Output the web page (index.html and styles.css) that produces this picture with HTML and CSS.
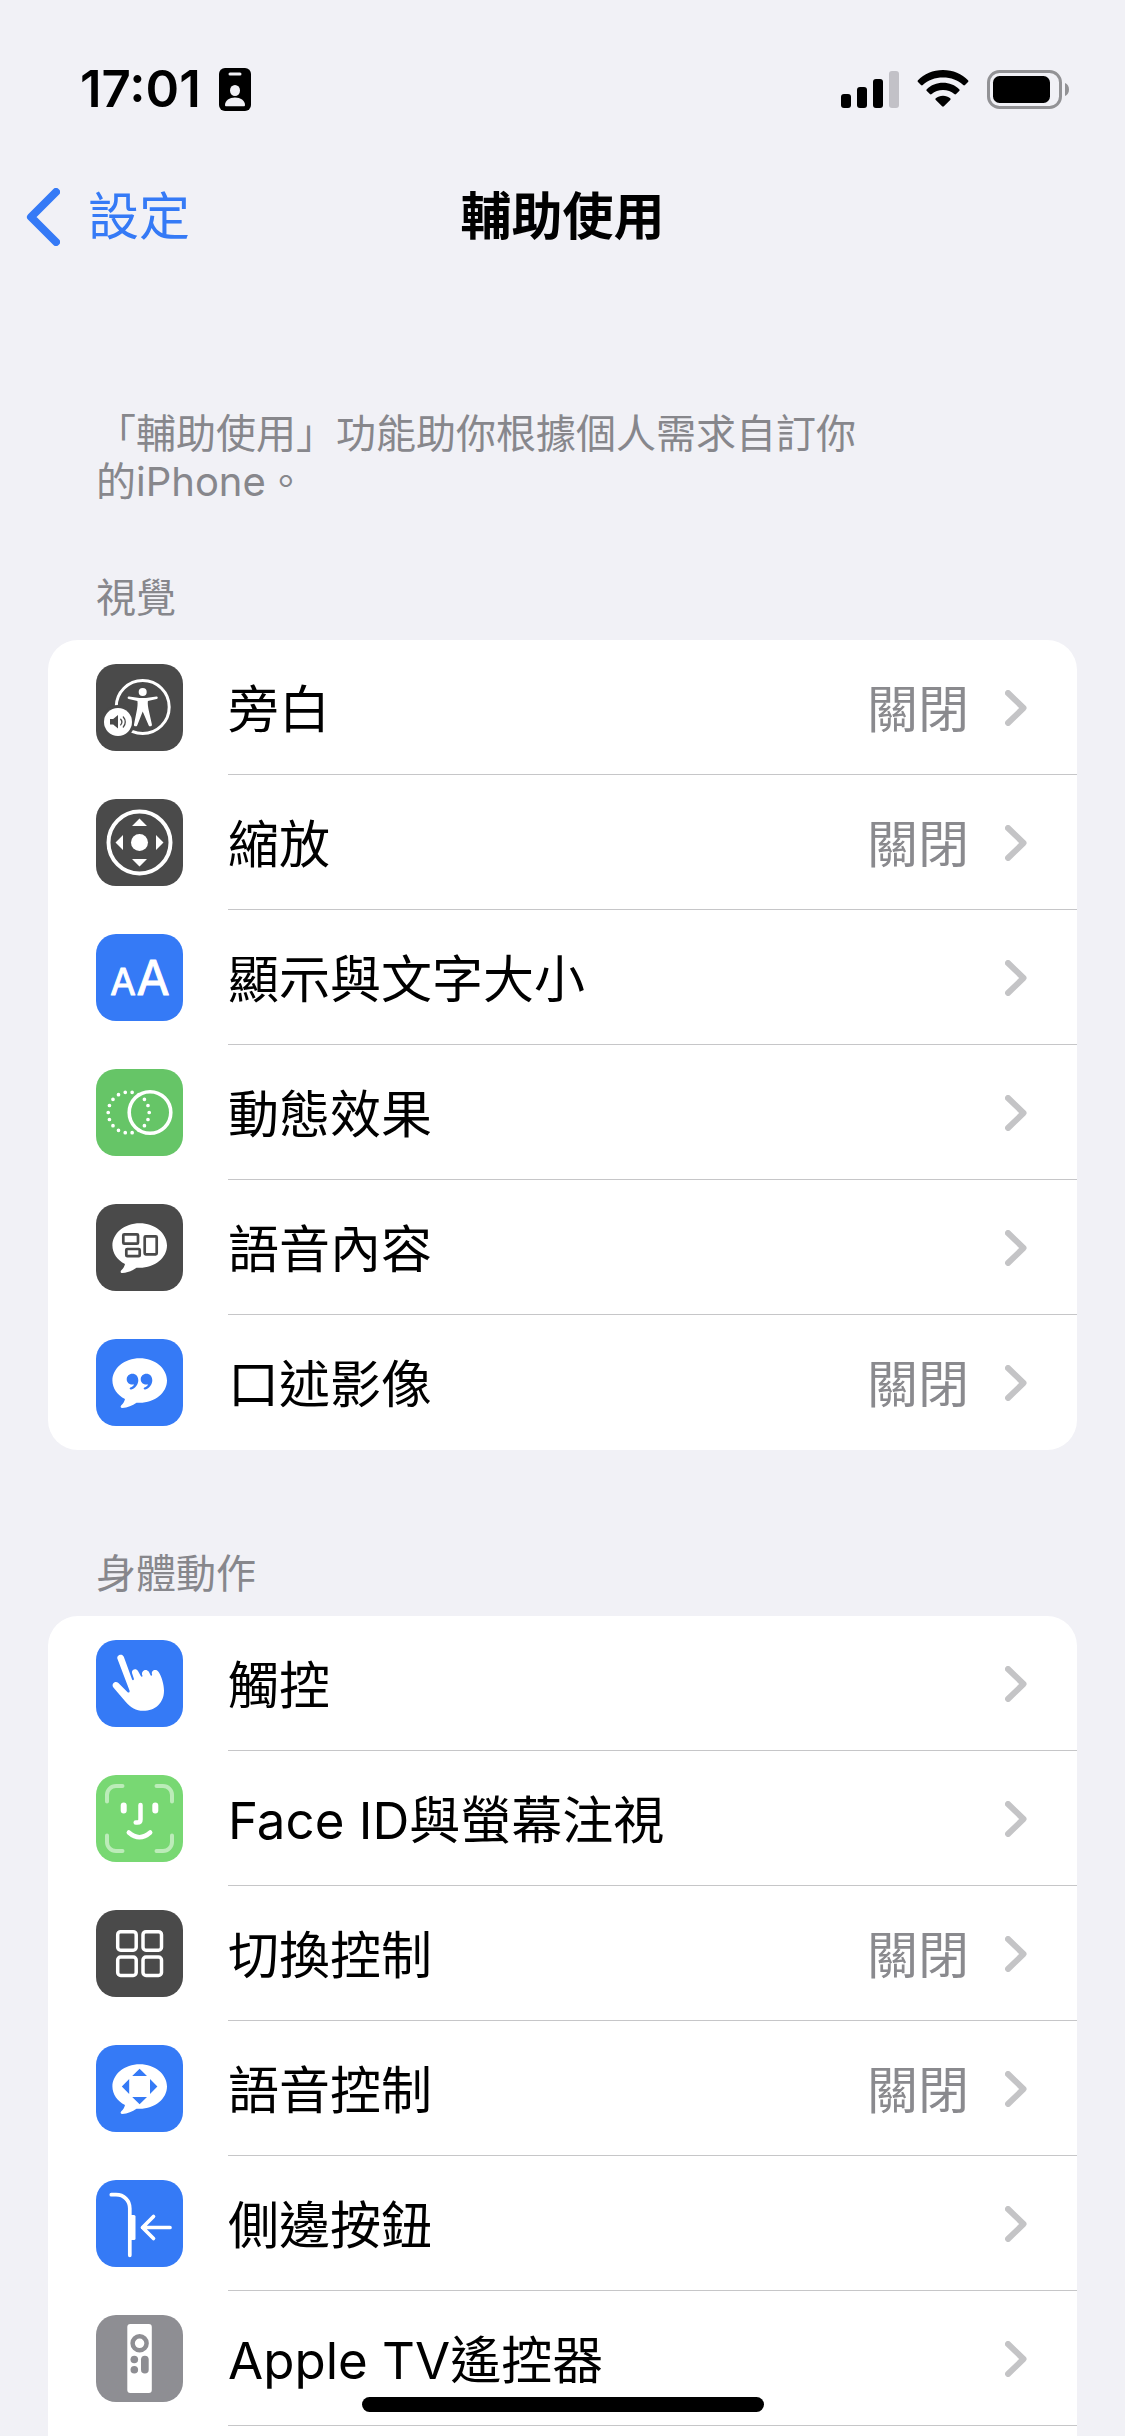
FILE: index.html
```html
<!DOCTYPE html>
<html lang="zh-Hant">

<head>
    <meta charset="UTF-8">
    <meta name="viewport" content="width=device-width, initial-scale=1.0">
    <title>輔助使用</title>
    <link rel="stylesheet" href="styles.css">
</head>

<body>
    <!-- shared shapes -->
    <svg class="defs" aria-hidden="true">
        <symbol id="chevron" viewBox="0 0 22 36">
            <path d="M3 3l15.500 15L3 33" fill="none" stroke="currentColor" stroke-width="6" stroke-linecap="round" stroke-linejoin="round"/>
        </symbol>
        <symbol id="bubble" viewBox="0 0 87 87">
            <path d="M43.700 19.200c15.100 0 27.300 10 27.300 22.300s-12.200 22.300-27.300 22.300h-3.200c-4 2.800-9 5-14.200 5.200-1.800 0-2.200-1.500-1-2.700 1.800-1.800 3.200-3.800 3.700-6.300C21.300 56 16.400 49.300 16.400 41.500c0-12.300 12.200-22.300 27.300-22.300z" fill="#fff"/>
        </symbol>
    </svg>

    <div class="status-bar">
        <div class="status-left">
            <span class="time">17:01</span>
            <svg width="32" height="43" viewBox="0 0 32 43" aria-hidden="true">
                <rect width="32" height="43" rx="6"/>
                <rect x="9.500" y="4.500" width="13" height="3" rx="1.500" fill="#f1f1f6"/>
                <ellipse cx="16" cy="22.500" rx="5" ry="5.500" fill="#f1f1f6"/>
                <path d="M6 37c0-4.500 4.500-7.500 10-7.500S26 32.500 26 37c0 1-.5 1.300-1.300 1.300H7.300C6.500 38.300 6 38 6 37z" fill="#f1f1f6"/>
            </svg>
        </div>
        <div class="status-right">
            <svg width="58" height="37" viewBox="0 0 58 37" aria-hidden="true">
                <rect y="23" width="10" height="14" rx="3"/>
                <rect x="16" y="16" width="10" height="21" rx="3"/>
                <rect x="32" y="8" width="10" height="29" rx="3"/>
                <rect x="48" width="10" height="37" rx="3" fill="#c2c1c7"/>
            </svg>
            <svg width="52" height="38" viewBox="0 0 52 38" aria-hidden="true">
                <path d="M26 0C36 0 45 4 51 10.300c.6.600.6 1.200 0 1.800l-3 3c-.6.600-1.200.600-1.800 0C41 10.200 34 7.600 26 7.600S11 10.200 5.800 15.100c-.6.600-1.200.600-1.800 0l-3-3c-.6-.6-.6-1.200 0-1.800C7 4 16 0 26 0z"/>
                <path d="M26 12.800c6.300 0 12 2.400 16.200 6.400.6.600.6 1.200 0 1.800l-3.100 3c-.6.600-1.200.6-1.800 0-3-2.500-7-4-11.300-4s-8.300 1.500-11.300 4c-.6.600-1.200.6-1.800 0l-3.100-3c-.6-.6-.6-1.200 0-1.800C14 15.200 19.700 12.800 26 12.800z"/>
                <path d="M26 25.700c2.800 0 5.300 1 7.200 2.600.6.500.6 1.100 0 1.700l-6.300 6.300c-.6.600-1.200.6-1.800 0L18.800 30c-.6-.6-.6-1.200 0-1.700 1.900-1.600 4.400-2.600 7.200-2.600z"/>
            </svg>
            <svg width="82" height="39" viewBox="0 0 82 39" aria-hidden="true">
                <rect x="1.500" y="1.500" width="72" height="36" rx="11" fill="none" stroke="#929295" stroke-width="3"/>
                <rect x="6" y="6" width="57" height="27" rx="6.500"/>
                <path d="M78 13c2.600 1 4 3.500 4 6.500s-1.400 5.500-4 6.500z" fill="#929295"/>
            </svg>
        </div>
    </div>

    <nav class="nav-bar">
        <a class="back" href="#">
            <svg width="34" height="58" viewBox="0 0 34 58" aria-hidden="true">
                <path d="M30 4L5 29l25 25" fill="none" stroke="currentColor" stroke-width="8" stroke-linecap="round" stroke-linejoin="round"/>
            </svg>
            設定
        </a>
        <h1>輔助使用</h1>
    </nav>

    <main>
        <p class="intro">「輔助使用」功能助你根據個人需求自訂你<span class="keep">的iPhone。</span></p>

        <section>
            <h2>視覺</h2>
            <ul class="card">
                <li>
                    <a class="row" href="#">
                        <svg class="icon dark" viewBox="0 0 87 87" aria-hidden="true">
                            <circle cx="46.700" cy="43" r="26.500" fill="none" stroke="#fff" stroke-width="3"/>
                            <circle cx="22" cy="58" r="17" fill="#4a4a4a"/>
                            <circle cx="46.700" cy="28" r="4"/>
                            <path d="M33 32.400l10.500 1.500h6.400l10.500-1.500c1.600-.2 2 2.200.3 2.600l-8.800 1.900c-.5 3 .3 6.500 1 10l3 13.500c.4 2-2.600 2.800-3.300.8l-5.900-13.700-5.400 13.700c-.8 2-3.800 1.200-3.300-.8l2.700-13.500c.7-3.500 1.200-7 .7-10l-8.700-1.900c-1.700-.4-1.300-2.800.3-2.600z"/>
                            <circle cx="22" cy="58" r="14"/>
                            <path d="M14 55h3.200l4.800-4v13.500l-4.800-4H14z" fill="#4a4a4a"/>
                            <path d="M24.700 55.300c1.400 1.600 1.400 4 0 5.600M27.300 53c2.600 2.800 2.600 7.200 0 10" fill="none" stroke="#4a4a4a" stroke-width="1.300" stroke-linecap="round"/>
                        </svg>
                        <span class="label">旁白</span>
                        <span class="value">關閉</span>
                        <svg class="chevron" aria-hidden="true"><use href="#chevron"/></svg>
                    </a>
                </li>
                <li>
                    <a class="row" href="#">
                        <svg class="icon dark" viewBox="0 0 87 87" aria-hidden="true">
                            <circle cx="43.500" cy="43.500" r="31" fill="none" stroke="#fff" stroke-width="4"/>
                            <circle cx="43.500" cy="43.500" r="8.500"/>
                            <path d="M43.500 19.500l7.500 7.500H36zM43.500 67.500l7.500-7.500H36zM19.500 43.500L27 36v15zM67.500 43.500L60 36v15z"/>
                        </svg>
                        <span class="label">縮放</span>
                        <span class="value">關閉</span>
                        <svg class="chevron" aria-hidden="true"><use href="#chevron"/></svg>
                    </a>
                </li>
                <li>
                    <a class="row" href="#">
                        <svg class="icon blue" viewBox="0 0 87 87" aria-hidden="true">
                            <g stroke="#fff" stroke-linejoin="round" text-anchor="middle">
                                <text x="27" y="61" font-size="37">A</text>
                                <text x="57" y="61" font-size="48">A</text>
                            </g>
                        </svg>
                        <span class="label">顯示與文字大小</span>
                        <svg class="chevron" aria-hidden="true"><use href="#chevron"/></svg>
                    </a>
                </li>
                <li>
                    <a class="row" href="#">
                        <svg class="icon green" viewBox="0 0 87 87" aria-hidden="true">
                            <circle cx="32.700" cy="43.500" r="20.500" fill="none" stroke="#fff" stroke-width="3.700" stroke-linecap="round" pathLength="18" stroke-dasharray="0 1"/>
                            <circle cx="54" cy="43.500" r="20.800" fill="none" stroke="#fff" stroke-width="3.600"/>
                        </svg>
                        <span class="label">動態效果</span>
                        <svg class="chevron" aria-hidden="true"><use href="#chevron"/></svg>
                    </a>
                </li>
                <li>
                    <a class="row" href="#">
                        <svg class="icon dark" viewBox="0 0 87 87" aria-hidden="true">
                            <use href="#bubble"/>
                            <g fill="none" stroke="#4a4a4a" stroke-width="2.700">
                                <rect x="27.300" y="30.300" width="14.700" height="9.400" rx="1"/>
                                <rect x="30.300" y="45" width="13.400" height="7.200" rx="1"/>
                                <rect x="48.700" y="32.300" width="12" height="18" rx="1"/>
                            </g>
                        </svg>
                        <span class="label">語音內容</span>
                        <svg class="chevron" aria-hidden="true"><use href="#chevron"/></svg>
                    </a>
                </li>
                <li>
                    <a class="row" href="#">
                        <svg class="icon blue" viewBox="0 0 87 87" aria-hidden="true">
                            <use href="#bubble"/>
                            <g fill="#357af6">
                                <path d="M36.300 34.700c3.600 0 6 2.700 6 6.500 0 4.300-3 8-7 9.300-1.500.5-2.300-1.300-.9-2 1.800-.8 3-1.700 3.700-3.100-4 .8-7.400-1.500-7.400-5.200 0-3.100 2.500-5.500 5.600-5.500z"/>
                                <path d="M50.300 34.700c3.600 0 6 2.700 6 6.500 0 4.300-3 8-7 9.300-1.500.5-2.300-1.300-.9-2 1.800-.8 3-1.700 3.700-3.100-4 .8-7.400-1.500-7.400-5.200 0-3.100 2.500-5.500 5.600-5.500z"/>
                            </g>
                        </svg>
                        <span class="label">口述影像</span>
                        <span class="value">關閉</span>
                        <svg class="chevron" aria-hidden="true"><use href="#chevron"/></svg>
                    </a>
                </li>
            </ul>
        </section>

        <section class="motor">
            <h2>身體動作</h2>
            <ul class="card">
                <li>
                    <a class="row" href="#">
                        <svg class="icon blue" viewBox="0 0 87 87" aria-hidden="true">
                            <path d="M21.500 19c-1.400-4 4.700-6.200 6.300-2.200l8.200 22.500c.5 1.400 2.200.9 1.900-.5l-1.900-5.900c-.7-3.500 4.200-5 6-1.900l2.800 5.100c.7 1.100 2 .5 1.600-.7-2-4.300 3.500-7.700 6.300-3.800l1.900 3.600c.6 1 1.800.5 1.500-.6-1.600-4.100 4-6.400 6.700-2.400 2.800 4.300 5.200 12 5.200 18.500C68 63 59 70.800 47.300 70.800c-7.500 0-12.500-3-17.500-8.800L17.400 47.500c-2.600-3.700 2-7.400 5-4.500l9 9c1.200 1.200 2.700.3 2.100-1.500z"/>
                        </svg>
                        <span class="label">觸控</span>
                        <svg class="chevron" aria-hidden="true"><use href="#chevron"/></svg>
                    </a>
                </li>
                <li>
                    <a class="row" href="#">
                        <svg class="icon lime" viewBox="0 0 87 87" aria-hidden="true">
                            <g fill="none" stroke="#fff" stroke-linecap="round">
                                <path d="M11 26.500V20a9 9 0 0 1 9-9h6.500M60.500 11H67a9 9 0 0 1 9 9v6.500M76 60.500V67a9 9 0 0 1-9 9h-6.500M26.500 76H20a9 9 0 0 1-9-9v-6.500" stroke-width="4" opacity=".5"/>
                                <path d="M27.700 30.500v5M59.300 30.500v5" stroke-width="6"/>
                                <path d="M44.500 30v14.500q0 3-3 3h-1.800M32.800 57.500q10.700 9.500 21.400 0" stroke-width="4.500"/>
                            </g>
                        </svg>
                        <span class="label">Face ID與螢幕注視</span>
                        <svg class="chevron" aria-hidden="true"><use href="#chevron"/></svg>
                    </a>
                </li>
                <li>
                    <a class="row" href="#">
                        <svg class="icon dark" viewBox="0 0 87 87" aria-hidden="true">
                            <g fill="none" stroke="#fff" stroke-width="3.500">
                                <rect x="21.700" y="21.700" width="18.500" height="18.500" rx="3"/>
                                <rect x="47" y="21.700" width="18.500" height="18.500" rx="3"/>
                                <rect x="21.700" y="47" width="18.500" height="18.500" rx="3"/>
                                <rect x="47" y="47" width="18.500" height="18.500" rx="3"/>
                            </g>
                        </svg>
                        <span class="label">切換控制</span>
                        <span class="value">關閉</span>
                        <svg class="chevron" aria-hidden="true"><use href="#chevron"/></svg>
                    </a>
                </li>
                <li>
                    <a class="row" href="#">
                        <svg class="icon blue" viewBox="0 0 87 87" aria-hidden="true">
                            <use href="#bubble"/>
                            <path d="M43.600 23.700l7.400 7.400H36.200zM43.600 59.300l7.400-7.400H36.200zM25.800 41.500l7.400-7.400v14.800zM61.400 41.500L54 34.100v14.800z" fill="#357af6"/>
                        </svg>
                        <span class="label">語音控制</span>
                        <span class="value">關閉</span>
                        <svg class="chevron" aria-hidden="true"><use href="#chevron"/></svg>
                    </a>
                </li>
                <li>
                    <a class="row" href="#">
                        <svg class="icon blue" viewBox="0 0 87 87" aria-hidden="true">
                            <g fill="none" stroke="#fff" stroke-width="3.700" stroke-linecap="round" stroke-linejoin="round">
                                <path d="M15.300 14.700H20c8 0 13.800 5.800 13.800 13.800v46.800"/>
                                <path d="M74 47.500H46.500M57.500 36.500l-11 11 11 11"/>
                            </g>
                            <rect x="33" y="35" width="6.500" height="25" rx="1.500"/>
                        </svg>
                        <span class="label">側邊按鈕</span>
                        <svg class="chevron" aria-hidden="true"><use href="#chevron"/></svg>
                    </a>
                </li>
                <li>
                    <a class="row" href="#">
                        <svg class="icon gray" viewBox="0 0 87 87" aria-hidden="true">
                            <rect x="31.300" y="9" width="24.500" height="69" rx="3"/>
                            <circle cx="43.600" cy="28.300" r="7" fill="none" stroke="#8e8e93" stroke-width="4.500"/>
                            <g fill="#8e8e93">
                                <circle cx="38.300" cy="44.500" r="3.800"/>
                                <circle cx="38.300" cy="54.800" r="3.800"/>
                                <rect x="45" y="40.700" width="7.700" height="17.800" rx="3.800"/>
                            </g>
                        </svg>
                        <span class="label">Apple TV遙控器</span>
                        <svg class="chevron" aria-hidden="true"><use href="#chevron"/></svg>
                    </a>
                </li>
            </ul>
        </section>
    </main>

    <div class="home-indicator"></div>
</body>

</html>
```

FILE: styles.css
```css
* {
    margin: 0;
    padding: 0;
    box-sizing: border-box;
}

body {
    display: flex;
    flex-direction: column;
    min-height: 100vh;
    font-family: Inter, 'Noto Sans CJK TC', sans-serif;
    font-size: 51px;
    line-height: 60px;
    background: #f1f1f6;
    color: #000;
}

a {
    color: inherit;
    text-decoration: none;
}

.defs {
    position: absolute;
    width: 0;
    height: 0;
}

/* status bar */
.status-bar {
    display: flex;
    justify-content: space-between;
    align-items: center;
    height: 144px;
    padding: 34px 56px 0 80px;
}

.status-left,
.status-right {
    display: flex;
    align-items: center;
}

.status-left {
    gap: 18px;
}

.status-right {
    gap: 18px;
}

.time {
    font-weight: 600;
}

/* navigation bar */
.nav-bar {
    display: grid;
    grid-template-columns: 1fr auto 1fr;
    align-items: center;
    height: 146px;
    padding: 0 26px;
}

.back {
    display: flex;
    align-items: center;
    gap: 28px;
    color: #357af6;
}

h1 {
    font-size: 51px;
    font-weight: 600;
}

/* content */
main {
    flex: 1;
    display: flex;
    flex-direction: column;
    padding: 120px 48px 0;
}

.intro,
h2 {
    padding: 0 48px;
    font-size: 40px;
    font-weight: 400;
    line-height: 48px;
    color: #87878c;
}

.intro {
    margin-bottom: 68px;
}

.keep {
    white-space: nowrap;
}

h2 {
    margin-bottom: 18px;
}

.motor {
    flex: 1;
    display: flex;
    flex-direction: column;
    margin-top: 100px;
}

.card {
    list-style: none;
    background: #fff;
    border-radius: 30px;
    overflow: hidden;
}

/* the list runs on below the fold */
.motor .card {
    flex: 1;
    border-radius: 30px 30px 0 0;
}

.row {
    position: relative;
    display: flex;
    align-items: center;
    padding: 24px 50px 24px 48px;
}

.row::after {
    content: '';
    position: absolute;
    left: 180px;
    right: 0;
    bottom: 0;
    height: 1px;
    background: #c6c6c8;
}

section:first-of-type li:last-child .row::after {
    display: none;
}

.label,
.value {
    padding-top: 4px;
}

.label {
    flex: 1;
    margin-left: 45px;
}

.value {
    color: #8a8a8e;
}

.chevron {
    width: 22px;
    height: 36px;
    margin-left: 36px;
    color: #c4c4c6;
}

/* icon tiles */
.icon {
    width: 87px;
    height: 87px;
    border-radius: 20px;
    fill: #fff;
}

.dark {
    background: #4a4a4a;
}

.blue {
    background: #357af6;
}

.green {
    background: #66c567;
}

.lime {
    background: #78d873;
}

.gray {
    background: #8e8e93;
}

.home-indicator {
    position: fixed;
    bottom: 24px;
    left: 50%;
    width: 402px;
    height: 15px;
    border-radius: 8px;
    background: #000;
    transform: translateX(-50%);
}
```
